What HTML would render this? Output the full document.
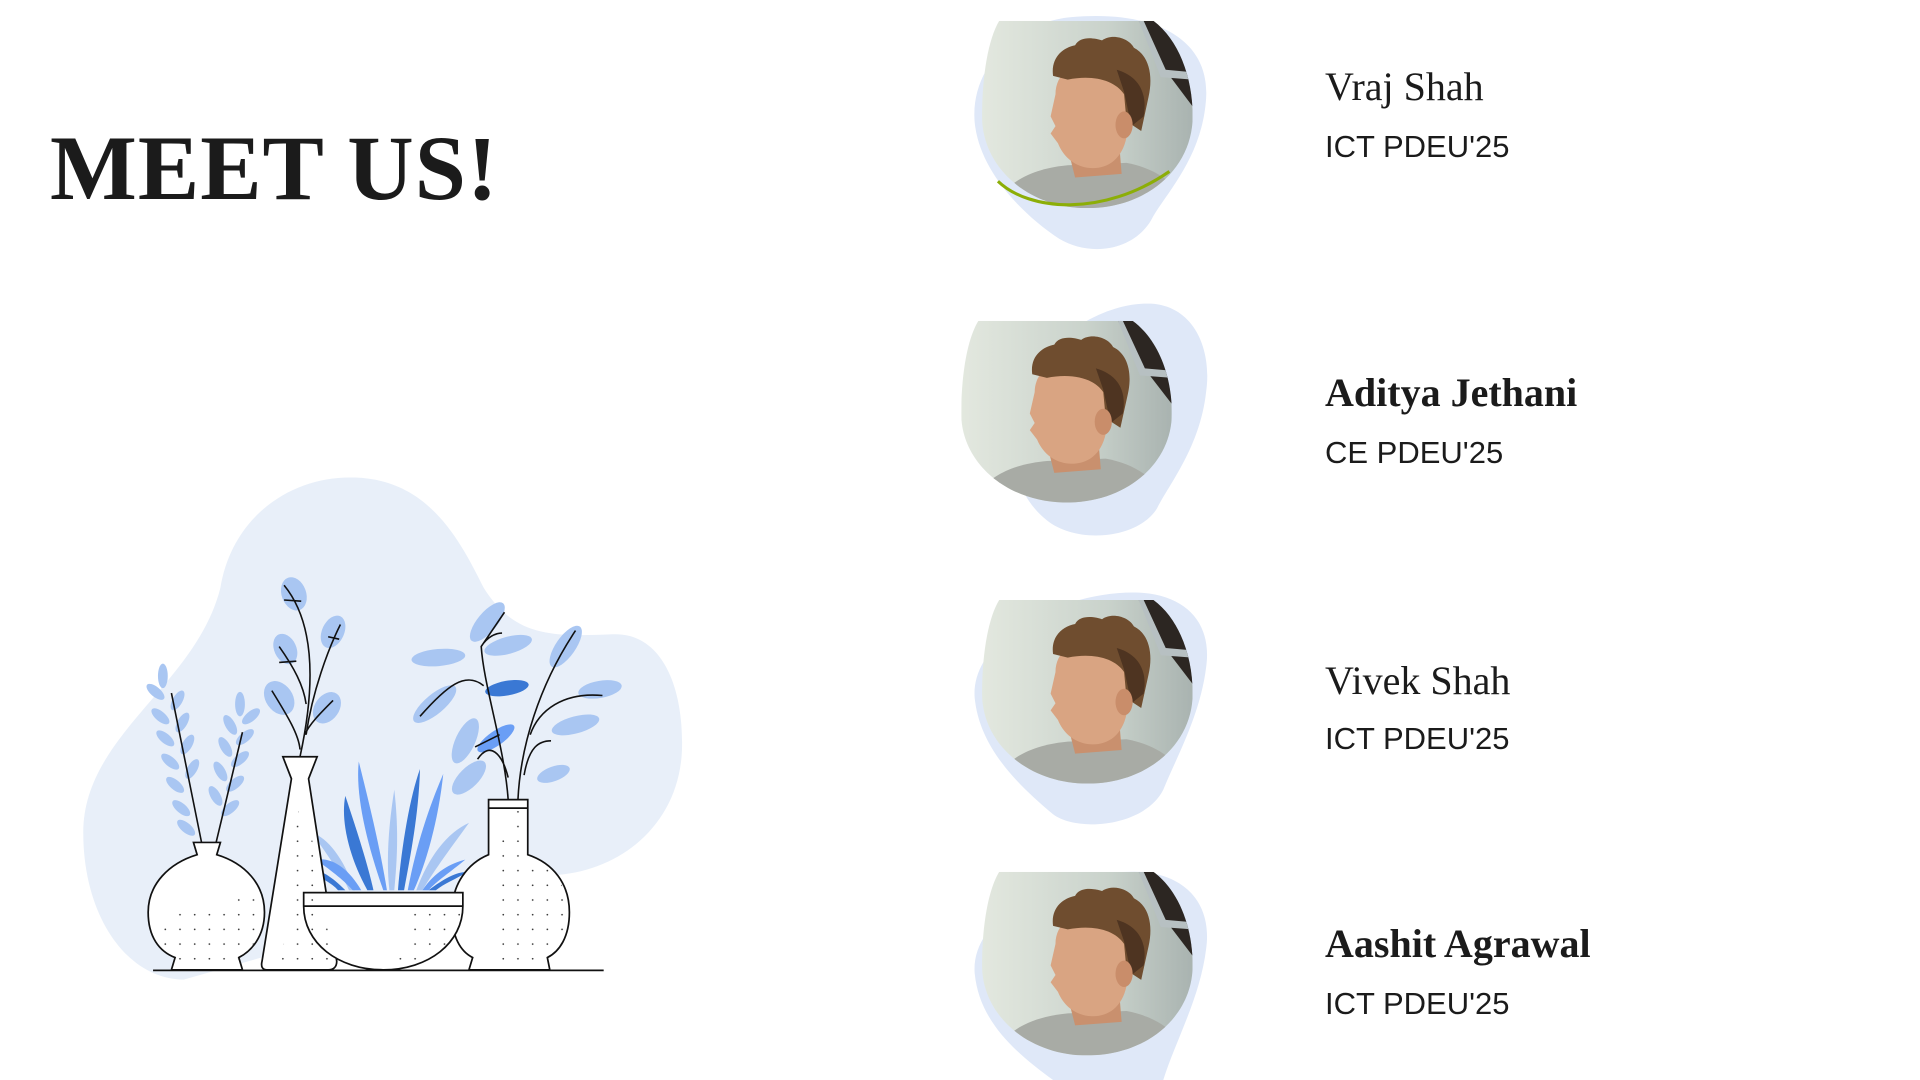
<!DOCTYPE html>
<html><head><meta charset="utf-8"><style>
html,body{margin:0;padding:0;background:#fff;width:1920px;height:1080px;overflow:hidden;position:relative}
svg{position:absolute;left:0;top:0}
.t{position:absolute;font-family:"Liberation Serif",serif;color:#1b1b1b;font-weight:bold;font-size:92px;left:50px;top:122px;letter-spacing:1px;line-height:1}
.n{position:absolute;left:1325px;font-family:"Liberation Serif",serif;font-size:40px;color:#1b1b1b;line-height:1;white-space:nowrap}
.s{position:absolute;left:1325px;font-family:"Liberation Sans",sans-serif;font-size:31px;color:#1b1b1b;line-height:1;white-space:nowrap}
</style></head><body>
<svg width="1920" height="1080" viewBox="0 0 1568 882">
<defs>
<pattern id="dots" width="12" height="12" patternUnits="userSpaceOnUse"><circle cx="3" cy="3" r="0.7" fill="#333"/></pattern>
<linearGradient id="bg" x1="0" x2="1" y1="0" y2="0"><stop offset="0" stop-color="#e3e8df"/><stop offset="0.6" stop-color="#c9d2cb"/><stop offset="1" stop-color="#a9b3b0"/></linearGradient>
<clipPath id="pc"><path d="M14,0 L140,0 C160,15 172,45 172,78 C172,120 135,153 86,153 C38,153 0,120 0,78 C0,45 5,15 14,0 Z"/></clipPath>
<g id="photo">
<g clip-path="url(#pc)">
<rect x="0" y="0" width="172" height="153" fill="url(#bg)"/>
<polygon points="128,0 172,0 172,70 148,38" fill="#2c2622"/>
<path d="M128,0 L132,0 L150,40 L172,42 L172,48 L146,46 Z" fill="#b7c0c2"/>
<path d="M10,153 C20,128 48,120 70,118 L118,116 C140,120 160,132 168,153 Z" fill="#a8aba5"/>
<path d="M70,104 L112,100 L114,125 L76,128 Z" fill="#c9906e"/>
<path d="M60,60 C60,40 80,30 100,34 C120,38 122,70 118,95 C114,115 100,122 86,120 C74,118 66,110 62,100 L56,92 L60,86 L56,78 Z" fill="#d9a482"/>
<path d="M58,45 C56,30 66,22 76,20 C80,12 92,14 98,16 C106,10 120,14 124,22 C136,28 140,44 136,62 L130,90 L118,82 L116,60 C108,48 90,44 70,48 Z" fill="#6f4d2f"/>
<path d="M110,40 C124,44 136,55 132,78 L122,86 L116,58 Z" fill="#4e3421"/>
<ellipse cx="116" cy="85" rx="7" ry="11" fill="#c98d6a"/>
</g></g>
</defs>

<path d="M180,480 C190,420 240,388 290,390 C350,392 375,440 395,480 C420,520 450,520 500,518 C540,516 558,560 557,610 C556,670 510,712 450,715 L150,800 C105,800 68,750 68,680 C68,600 160,560 180,480 Z" fill="#e8eff9"/>

<g fill="#a9c6f2">
<ellipse cx="133" cy="552" rx="4" ry="10"/><ellipse cx="127" cy="565" rx="4" ry="9" transform="rotate(-50 127 565)"/>
<ellipse cx="145" cy="572" rx="4" ry="9" transform="rotate(30 145 572)"/><ellipse cx="131" cy="585" rx="4" ry="9" transform="rotate(-50 131 585)"/>
<ellipse cx="149" cy="590" rx="4" ry="9" transform="rotate(30 149 590)"/><ellipse cx="135" cy="603" rx="4" ry="9" transform="rotate(-50 135 603)"/>
<ellipse cx="153" cy="608" rx="4" ry="9" transform="rotate(30 153 608)"/><ellipse cx="139" cy="622" rx="4" ry="9" transform="rotate(-50 139 622)"/>
<ellipse cx="157" cy="628" rx="4" ry="9" transform="rotate(30 157 628)"/><ellipse cx="143" cy="641" rx="4" ry="9" transform="rotate(-50 143 641)"/>
<ellipse cx="148" cy="660" rx="4" ry="9" transform="rotate(-50 148 660)"/><ellipse cx="152" cy="676" rx="4" ry="9" transform="rotate(-50 152 676)"/>
<ellipse cx="196" cy="575" rx="4" ry="10"/><ellipse cx="205" cy="585" rx="4" ry="9" transform="rotate(50 205 585)"/>
<ellipse cx="188" cy="592" rx="4" ry="9" transform="rotate(-30 188 592)"/><ellipse cx="200" cy="602" rx="4" ry="9" transform="rotate(50 200 602)"/>
<ellipse cx="184" cy="610" rx="4" ry="9" transform="rotate(-30 184 610)"/><ellipse cx="196" cy="620" rx="4" ry="9" transform="rotate(50 196 620)"/>
<ellipse cx="180" cy="630" rx="4" ry="9" transform="rotate(-30 180 630)"/><ellipse cx="192" cy="640" rx="4" ry="9" transform="rotate(50 192 640)"/>
<ellipse cx="188" cy="660" rx="4" ry="9" transform="rotate(50 188 660)"/><ellipse cx="176" cy="650" rx="4" ry="9" transform="rotate(-30 176 650)"/>
</g>
<path d="M140,566 L165,690 M198,598 L176,690" stroke="#111" stroke-width="1.3" fill="none"/>

<g fill="#a9c6f2">
<ellipse cx="240" cy="485" rx="10" ry="14" transform="rotate(-20 240 485)"/>
<ellipse cx="272" cy="516" rx="9" ry="14" transform="rotate(25 272 516)"/>
<ellipse cx="233" cy="530" rx="9" ry="13" transform="rotate(-25 233 530)"/>
<ellipse cx="228" cy="570" rx="11" ry="15" transform="rotate(-35 228 570)"/>
<ellipse cx="267" cy="578" rx="10" ry="14" transform="rotate(35 267 578)"/>
</g>
<path d="M232,478 C250,500 262,540 245,618 M278,510 C268,530 255,565 250,600 M228,528 C240,545 248,560 250,575 M222,564 C235,585 244,600 245,612 M272,572 C262,582 252,592 249,600 M232,490 L246,491 M268,520 L277,522 M228,541 L242,540" stroke="#111" stroke-width="1.3" fill="none"/>

<g fill="#a9c6f2">
<ellipse cx="398" cy="508" rx="8" ry="20" transform="rotate(40 398 508)"/>
<ellipse cx="415" cy="527" rx="7" ry="20" transform="rotate(75 415 527)"/>
<ellipse cx="358" cy="537" rx="7" ry="22" transform="rotate(85 358 537)"/>
<ellipse cx="462" cy="528" rx="8" ry="20" transform="rotate(35 462 528)"/>
<ellipse cx="355" cy="575" rx="8" ry="22" transform="rotate(50 355 575)"/>
<ellipse cx="490" cy="563" rx="7" ry="18" transform="rotate(80 490 563)"/>
<ellipse cx="380" cy="605" rx="8" ry="20" transform="rotate(25 380 605)"/>
<ellipse cx="470" cy="592" rx="7" ry="20" transform="rotate(75 470 592)"/>
<ellipse cx="383" cy="635" rx="8" ry="18" transform="rotate(45 383 635)"/>
<ellipse cx="452" cy="632" rx="6" ry="14" transform="rotate(70 452 632)"/>
</g>
<ellipse cx="414" cy="562" rx="6" ry="18" transform="rotate(80 414 562)" fill="#3a78d4"/>
<ellipse cx="405" cy="603" rx="6" ry="18" transform="rotate(55 405 603)" fill="#6a9ef5"/>
<path d="M415,653 C412,610 395,560 393,528 L412,500 M393,528 C398,520 405,517 410,517 M395,560 C380,548 365,560 343,585 M423,653 C425,610 440,560 470,515 M433,600 C440,580 460,565 492,568 M428,633 C432,610 440,605 450,605 M415,635 C410,615 400,605 390,620 M408,600 C398,605 392,608 388,610" stroke="#111" stroke-width="1.3" fill="none"/>

<g>
<path d="M313,727 C300,690 290,650 293,622 C300,650 310,690 316,727 Z" fill="#6a9ef5"/>
<path d="M300,727 C285,700 278,670 282,650 C292,680 300,705 305,727 Z" fill="#3a78d4"/>
<path d="M325,727 C328,690 335,650 343,628 C342,665 335,700 330,727 Z" fill="#3a78d4"/>
<path d="M318,727 C315,700 318,670 322,645 C326,680 324,705 322,727 Z" fill="#a9c6f2"/>
<path d="M333,727 C340,690 350,660 362,632 C358,670 348,705 338,727 Z" fill="#6a9ef5"/>
<path d="M340,727 C350,700 365,680 383,672 C370,690 355,710 345,727 Z" fill="#a9c6f2"/>
<path d="M290,727 C280,700 268,685 255,680 C268,700 280,715 285,727 Z" fill="#a9c6f2"/>
<path d="M295,727 C285,710 272,700 258,702 C272,712 282,720 288,727 Z" fill="#6a9ef5"/>
<path d="M282,727 C270,715 260,708 246,710 C262,716 272,722 276,727 Z" fill="#3a78d4"/>
<path d="M345,727 C355,712 368,705 380,702 C368,712 356,720 350,727 Z" fill="#6a9ef5"/>
<path d="M350,727 C362,718 372,712 382,712 C372,718 362,722 356,727 Z" fill="#3a78d4"/>
</g>

<g stroke="#111" stroke-width="1.4" fill="#fff">
<path d="M158,688 L180,688 L177,698 C200,705 216,722 216,745 C216,765 205,777 195,782 L198,792 L140,792 L143,782 C130,777 121,765 121,745 C121,722 138,705 161,698 Z"/>
<path d="M231,618 L259,618 L252,636 L275,785 C275,790 272,792 268,792 L218,792 C214,792 213,789 214,785 L238,636 Z"/>
<path d="M399,653 L431,653 L431,698 C452,705 465,722 465,745 C465,765 457,777 447,782 L449,792 L383,792 L386,782 C376,777 369,765 369,745 C369,722 382,705 399,698 Z"/>
<line x1="399" y1="660" x2="431" y2="660"/>
<path d="M248,729 L378,729 L378,740 C378,770 350,792 313,792 C276,792 248,770 248,740 Z"/>
<line x1="248" y1="740" x2="378" y2="740"/>
</g>
<g fill="url(#dots)">
<path d="M150,740 C180,745 200,730 213,720 C216,745 216,770 195,782 L198,792 L140,792 L143,782 C130,777 125,765 124,755 Z"/>
<path d="M247,640 L272,785 L230,785 L246,640 Z"/>
<path d="M420,662 L430,662 L431,700 C452,705 463,722 463,745 C463,765 455,777 445,782 L447,790 L400,790 L402,700 Z"/>
<path d="M330,742 L376,742 C376,770 350,790 313,790 C330,780 340,765 330,742 Z"/>
</g>
<line x1="125" y1="792.5" x2="493" y2="792.5" stroke="#111" stroke-width="1.4"/>

<path d="M875,14 C940,8 988,30 985,80 C982,130 950,160 940,180 C925,205 890,210 865,195 C835,175 800,140 796,100 C792,55 830,18 875,14 Z" fill="#dfe8f8"/>
<path d="M940,248 C975,250 990,285 985,320 C980,365 955,395 945,415 C930,440 880,445 855,425 C830,405 820,370 830,330 C845,280 900,246 940,248 Z" fill="#dfe8f8"/>
<path d="M930,484 C970,486 990,510 985,545 C980,585 960,620 950,645 C935,675 880,680 860,665 C830,640 800,610 796,570 C792,520 870,482 930,484 Z" fill="#dfe8f8"/>
<path d="M930,712 C970,714 990,740 985,775 C980,815 960,850 950,882 L860,882 C830,860 800,835 796,795 C792,745 870,710 930,712 Z" fill="#dfe8f8"/>

<use href="#photo" transform="translate(802,17)"/>
<path d="M815,148 C840,172 900,178 955,140" stroke="#8cae07" stroke-width="2.5" fill="none"/>
<use href="#photo" transform="translate(785,262) scale(1,0.97)"/>
<use href="#photo" transform="translate(802,490) scale(1,0.98)"/>
<use href="#photo" transform="translate(802,712) scale(1,0.98)"/>
</svg>

<div class="t">MEET US!</div>

<div class="n" style="top:67px">Vraj Shah</div>
<div class="s" style="top:131px">ICT PDEU'25</div>
<div class="n" style="top:373px;font-weight:bold">Aditya Jethani</div>
<div class="s" style="top:437px">CE PDEU'25</div>
<div class="n" style="top:661px">Vivek Shah</div>
<div class="s" style="top:723px">ICT PDEU'25</div>
<div class="n" style="top:924px;font-weight:bold">Aashit Agrawal</div>
<div class="s" style="top:988px">ICT PDEU'25</div>
</body></html>
